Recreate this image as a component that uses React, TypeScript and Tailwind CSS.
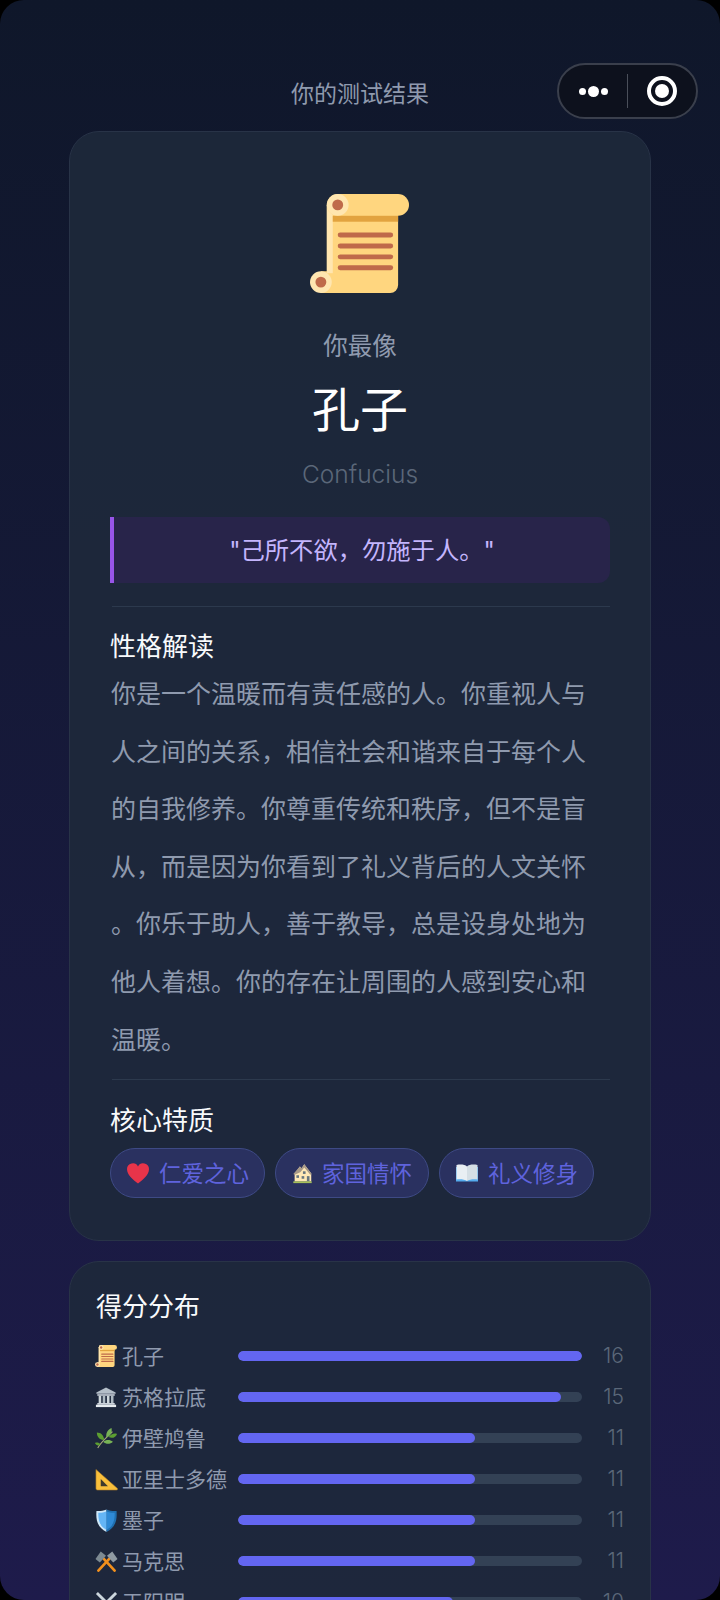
const F = "font-['Noto_Sans_CJK_SC','Noto_Sans',sans-serif]";
const L = "font-['Inter','Noto_Sans_CJK_SC',sans-serif]";

function Scroll({ className }: { className: string }) {
  return (
    <svg viewBox="0 0 100 100" className={className}>
      <path d="M17 11h72v81a8 8 0 0 1-8 8H11V78h6z" fill="#ffd67f" />
      <rect x="17" y="11" width="6" height="69" fill="#ffe6b0" />
      <circle cx="11" cy="89" r="11" fill="#ffe6b0" />
      <rect x="17" y="0" width="83" height="22" rx="11" fill="#ffd67f" />
      <rect x="23" y="22" width="66" height="6" fill="#e2a33f" />
      <circle cx="28" cy="11" r="11" fill="#ffe6b0" />
      <circle cx="28" cy="11" r="5.5" fill="#bf6a4a" />
      <rect x="28" y="39" width="56" height="5" rx="2.5" fill="#bf6a4a" />
      <rect x="28" y="50" width="56" height="5" rx="2.5" fill="#bf6a4a" />
      <rect x="28" y="61" width="56" height="5" rx="2.5" fill="#bf6a4a" />
      <rect x="28" y="72" width="56" height="5" rx="2.5" fill="#bf6a4a" />
      <circle cx="11" cy="89" r="5.5" fill="#bf6a4a" />
    </svg>
  );
}

function Building() {
  return (
    <svg viewBox="0 0 24 24" className="w-[22px] h-[22px]">
      <path d="M12 1.500 22.500 7v1.500h-21V7z" fill="#b4bec8" />
      <rect x="2.500" y="9" width="19" height="1.600" fill="#d5dce3" />
      <rect x="4" y="10.600" width="2.800" height="8" fill="#cfd8dc" />
      <rect x="8.400" y="10.600" width="2.800" height="8" fill="#aebac3" />
      <rect x="13" y="10.600" width="2.800" height="8" fill="#cfd8dc" />
      <rect x="17.400" y="10.600" width="2.800" height="8" fill="#aebac3" />
      <rect x="2.500" y="18.600" width="19" height="1.800" fill="#d5dce3" />
      <rect x="1" y="20.400" width="22" height="2.600" fill="#e6ebef" />
    </svg>
  );
}
function Herb() {
  return (
    <svg viewBox="0 0 24 24" className="w-[22px] h-[22px]">
      <path d="M3 23C6 17 12 12 19 5" stroke="#a9a77c" strokeWidth="1.200" fill="none" />
      <path d="M10 14C9.500 9 6.500 6 2 6c0 5 3.500 8.500 8 8z" fill="#5c9e31" />
      <path d="M12.500 11.500C11.500 7 13.500 3 18 1c1 4.500-1 8.500-5.500 10.500z" fill="#77b255" />
      <path d="M15 11c2-3 5.500-4.500 9-3.500-1 3.500-5 5.500-9 3.500z" fill="#5c9e31" />
      <path d="M9 16c3-2.500 7.500-2.500 10.500 0-3 3-7.500 3-10.500 0z" fill="#77b255" />
      <path d="M6 19c-1.500-2-4-2.500-6-1.500 1 2.500 4 3.500 6 1.500z" fill="#5c9e31" />
    </svg>
  );
}
function Ruler() {
  return (
    <svg viewBox="0 0 24 24" className="w-[23px] h-[23px]">
      <path d="M1 1.500 23.500 21.500q.5 1.500-1 1.500H2.500Q1 23 1 21.500z" fill="#f9bf3b" stroke="#a8792a" strokeWidth=".6" />
      <path d="M6 11.500 13.500 19H6z" fill="#3e3a2c" />
    </svg>
  );
}
function Shield() {
  return (
    <svg viewBox="0 0 24 24" className="w-[23px] h-[23px]">
      <path d="M12 .500C8 2 5 2.300 1.500 2c-.5 8.500 0 16.500 10.500 22z" fill="#cfe7f7" />
      <path d="M12 .500c4 1.500 7 1.800 10.500 1.500.5 8.500 0 16.500-10.500 22z" fill="#1f6fb0" />
      <path d="M12 2.500C9 3.500 6.500 4 3.500 3.800c-.2 6.500.5 13.700 8.500 18z" fill="#64b5f6" />
      <path d="M12 2.500c3 1 5.500 1.500 8.500 1.300.2 6.500-.5 13.700-8.500 18z" fill="#2f8ad6" />
    </svg>
  );
}
function Tools() {
  return (
    <svg viewBox="0 0 24 24" className="w-[23px] h-[23px]">
      <path d="M3.500 21.500 17 7" stroke="#f18f1c" strokeWidth="2.800" strokeLinecap="round" />
      <path d="M20.500 21.500 7 7" stroke="#f18f1c" strokeWidth="2.800" strokeLinecap="round" />
      <path d="M.5 9.500 6 1.500 11.500 6 5 13z" fill="#7d8a92" />
      <path d="M23.500 9.500 18 1.500 12.500 6 19 13z" fill="#8f9aa2" />
    </svg>
  );
}
function Swords() {
  return (
    <svg viewBox="0 0 24 24" className="w-[23px] h-[23px]">
      <path d="M2 2 19 19" stroke="#ccd6dd" strokeWidth="3" />
      <path d="M22 2 5 19" stroke="#ccd6dd" strokeWidth="3" />
      <path d="M17 22 22 17M7 22 2 17" stroke="#8a6a3a" strokeWidth="2.400" />
    </svg>
  );
}
function Heart() {
  return (
    <svg viewBox="0 0 24 24" className="w-[24px] h-[24px]">
      <path d="M12 22.500C7 18.500 1 14 1 8a5.800 5.800 0 0 1 11-2.500A5.800 5.800 0 0 1 23 8c0 6-6 10.500-11 14.500z" fill="#e8344a" />
    </svg>
  );
}
function House() {
  return (
    <svg viewBox="0 0 24 24" className="w-[21px] h-[21px]">
      <path d="M3 12 9 4l2 2 3-4.500L22 12v9H3z" fill="#ffe8b6" />
      <path d="M14 1.500 22.500 12.500 21 13.500 14 5 9.500 10.500 3 13.500 1.500 12.500 9 4l2 2z" fill="#a89a88" />
      <rect x="5" y="14" width="3" height="3" fill="#66757f" />
      <rect x="12.500" y="9.500" width="3" height="3" fill="#66757f" />
      <rect x="17" y="15" width="3" height="6" fill="#66757f" />
      <rect x="11" y="15" width="3" height="3" fill="#66757f" />
      <rect x="1.500" y="21" width="21" height="2" fill="#a6c05a" />
    </svg>
  );
}
function Book() {
  return (
    <svg viewBox="0 0 24 24" className="w-[24px] h-[24px]">
      <path d="M1 6h22v14.500H1z" fill="#55acee" />
      <path d="M1.500 4c4-1 8.500-.500 10.500 1.500V20c-2-1.500-6.500-2-10.500-1.500z" fill="#e9eff3" />
      <path d="M22.500 4c-4-1-8.500-.500-10.500 1.500V20c2-1.500 6.500-2 10.500-1.500z" fill="#d5dfe5" />
    </svg>
  );
}

const lines = [
  "你是一个温暖而有责任感的人。你重视人与",
  "人之间的关系，相信社会和谐来自于每个人",
  "的自我修养。你尊重传统和秩序，但不是盲",
  "从，而是因为你看到了礼义背后的人文关怀",
  "。你乐于助人，善于教导，总是设身处地为",
  "他人着想。你的存在让周围的人感到安心和",
  "温暖。",
];

const rows = [
  { icon: <Scroll className="w-[22px] h-[22px]" />, name: "孔子", value: 16, bar: "w-full" },
  { icon: <Building />, name: "苏格拉底", value: 15, bar: "w-[94%]" },
  { icon: <Herb />, name: "伊壁鸠鲁", value: 11, bar: "w-[69%]" },
  { icon: <Ruler />, name: "亚里士多德", value: 11, bar: "w-[69%]" },
  { icon: <Shield />, name: "墨子", value: 11, bar: "w-[69%]" },
  { icon: <Tools />, name: "马克思", value: 11, bar: "w-[69%]" },
  { icon: <Swords />, name: "王阳明", value: 10, bar: "w-[62.500%]" },
];

const tags = [
  { icon: <Heart />, text: "仁爱之心", w: "w-[155px]" },
  { icon: <House />, text: "家国情怀", w: "w-[154px]" },
  { icon: <Book />, text: "礼义修身", w: "w-[155px]" },
];

export default function App() {
  return (
    <div className="h-[1600px] w-[720px] overflow-hidden bg-black">
      <div className={`${F} h-[1600px] rounded-[24px] overflow-hidden bg-gradient-to-b from-[#0f172a] to-[#1e1b4b] relative px-[69px] pt-[79px]`}>
        <div className="absolute left-[557px] top-[63px] w-[141px] h-[56px] rounded-full border-2 border-[#3a3f4c] bg-[#0d111d] flex items-center">
          <div className="w-[67px] flex items-center justify-center gap-[2px] ml-[1px]">
            <span className="w-[7px] h-[7px] rounded-full bg-white" />
            <span className="w-[11px] h-[11px] rounded-full bg-white" />
            <span className="w-[7px] h-[7px] rounded-full bg-white" />
          </div>
          <div className="w-[1px] h-[34px] bg-[#4a4f5a]" />
          <div className="flex-1 flex items-center justify-center pr-[1px]">
            <div className="w-[30px] h-[30px] rounded-full border-[4px] border-white flex items-center justify-center">
              <span className="w-[14px] h-[14px] rounded-full bg-white" />
            </div>
          </div>
        </div>

        <div className="h-[26px] flex items-center justify-center text-[23px] text-[#8f9aae] mb-[26px]">你的测试结果</div>

        <div className="w-[582px] h-[1110px] rounded-[30px] border border-[#283347] bg-[#1e293b]/90 flex flex-col items-center pt-[62px] px-[40px]">
          <Scroll className="w-[99px] h-[99px] shrink-0 -ml-[1px]" />
          <div className="mt-[34px] text-[24.500px] leading-[36px] text-[#8f9aae]">你最像</div>
          <div className="mt-[13px] text-[48px] leading-[60px] text-white">孔子</div>
          <div className={`mt-[20px] text-[24.500px] leading-[36px] font-light text-[#5b6779] ${L}`}>Confucius</div>
          <div className={`mt-[25px] w-full h-[66px] shrink-0 rounded-r-[12px] border-l-[4px] border-[#9855e8] bg-[#28244a] flex items-center justify-center text-[24.300px] text-[#c4b5fd] ${L}`}>
            "己所不欲，勿施于人。"
          </div>
          <div className="mt-[23px] ml-[1px] w-[498px] h-px bg-[#334155]/70 shrink-0" />
          <div className="mt-[20px] w-full text-[26px] leading-[36px] text-[#f8fafc]">性格解读</div>
          <div className="w-full pl-[1px] text-[25px] leading-[57.6px] text-[#8f9aae] whitespace-nowrap mt-[1px]">
            {lines.map((l) => (
              <div key={l}>{l}</div>
            ))}
          </div>
          <div className="mt-[12px] ml-[1px] w-[498px] h-px bg-[#334155]/70 shrink-0" />
          <div className="mt-[21px] w-full text-[26px] leading-[36px] text-[#f8fafc]">核心特质</div>
          <div className="mt-[11px] w-full flex gap-[10px]">
            {tags.map((t) => (
              <div key={t.text} className={`${t.w} h-[50px] rounded-full border border-[#3e4a85] bg-[#2a3160] flex items-center justify-center gap-[9px] text-[22.500px] text-[#5f63dd]`}>
                {t.icon}
                <span>{t.text}</span>
              </div>
            ))}
          </div>
        </div>

        <div className="mt-[20px] w-[582px] h-[500px] rounded-[30px] border border-[#283347] bg-[#1e293b]/90 pt-[25px] pl-[26px] pr-[26px]">
          <div className="text-[26px] leading-[36px] text-[#f8fafc]">得分分布</div>
          <div className="mt-[15px] flex flex-col gap-[5px]">
            {rows.map((r) => (
              <div key={r.name} className="h-[36px] flex items-center">
                <div className="w-[24px] shrink-0 flex justify-center -ml-[2px] mr-[4px]">{r.icon}</div>
                <div className="w-[116px] shrink-0 text-[21px] text-[#8f9aae] whitespace-nowrap">{r.name}</div>
                <div className="w-[344px] h-[10px] rounded-full bg-[#334155] overflow-hidden shrink-0">
                  <div className={`h-full rounded-full bg-[#6366f1] ${r.bar}`} />
                </div>
                <div className={`flex-1 text-right text-[21px] font-light text-[#5b6779] ${L}`}>{r.value}</div>
              </div>
            ))}
          </div>
        </div>
      </div>
    </div>
  );
}
